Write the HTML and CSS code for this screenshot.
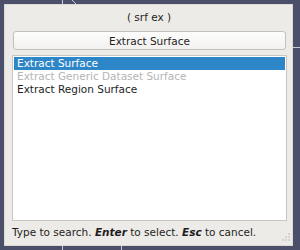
FILE: index.html
```html
<!DOCTYPE html>
<html lang="en">
<head>
    <meta charset="UTF-8">
    <title>Quick Launch</title>
    <link rel="stylesheet" href="styles.css">
</head>
<body>

<!-- pipeline canvas behind the dialog -->
<svg class="canvas" width="300" height="250" viewBox="0 0 300 250">
    <line x1="62.5" y1="0" x2="62.5" y2="250" stroke="#c9cad6" stroke-width="1"/>
    <line x1="72" y1="0" x2="78" y2="6" stroke="#c9cad6" stroke-width="1"/>
    <line x1="121.5" y1="240" x2="121.5" y2="250" stroke="#c9cad6" stroke-width="1"/>
    <line x1="290" y1="47.5" x2="300" y2="47.5" stroke="#c9cad6" stroke-width="1"/>
</svg>

<div class="dialog">
    <div class="search">( srf ex )</div>
    <button class="launch">Extract Surface</button>

    <ul class="results">
        <li class="selected">Extract Surface</li>
        <li class="disabled">Extract Generic Dataset Surface</li>
        <li>Extract Region Surface</li>
    </ul>

    <p class="hint">Type to search. <b>Enter</b> to select. <b>Esc</b> to cancel.</p>

    <!-- size grip -->
    <svg class="grip" width="10" height="10" viewBox="0 0 10 10">
        <rect x="8" y="0" width="2" height="2" fill="#d6d3cd"/>
        <rect x="5" y="3" width="2" height="2" fill="#d6d3cd"/>
        <rect x="8" y="3" width="2" height="2" fill="#d6d3cd"/>
        <rect x="2" y="6" width="2" height="2" fill="#d6d3cd"/>
        <rect x="5" y="6" width="2" height="2" fill="#d6d3cd"/>
        <rect x="8" y="6" width="2" height="2" fill="#d6d3cd"/>
    </svg>
</div>

</body>
</html>
```

FILE: styles.css
```css
/* General Styles */
body {
    margin: 0;
    width: 300px;
    height: 250px;
    background-color: #4b4f69;
    font-family: "DejaVu Sans", sans-serif;
    font-size: 10.5px;
    color: #1e1e1e;
    overflow: hidden;
    position: relative;
}
.canvas {
    position: absolute;
    left: 0;
    top: 0;
}
.dialog {
    position: relative;
    box-sizing: border-box;
    margin: 4px 0 0 4px;
    width: 289px;
    height: 242px;
    padding: 0 6px 0 7px;
    background-color: #edebe7;
    border: 1px solid #dcdad5;
    display: flex;
    flex-direction: column;
}
.search {
    text-align: center;
    height: 23px;
    line-height: 24px;
}
.launch {
    margin: 3px 0 0 1px;
    height: 19px;
    width: 273px;
    font-family: inherit;
    font-size: 10.5px;
    color: #1e1e1e;
    background: linear-gradient(#fdfdfc, #f2f1ef);
    border: 1px solid #c3c0bb;
    border-radius: 3px;
    padding: 0;
}
.results {
    list-style: none;
    box-sizing: border-box;
    margin: 5px 0 0 0;
    padding: 1px;
    width: 275px;
    height: 166px;
    background-color: white;
    border: 1px solid #c9c6c1;
}
.results li {
    height: 13px;
    line-height: 13px;
    padding-left: 3px;
}
.results .selected {
    background-color: #2d86c8;
    color: white;
}
.results .disabled {
    color: #b4b4b4;
}
.hint {
    margin: 5px 0 0 0;
    line-height: 12px;
}
.hint b {
    font-style: italic;
}
.grip {
    position: absolute;
    right: 2px;
    bottom: 2px;
}
```
